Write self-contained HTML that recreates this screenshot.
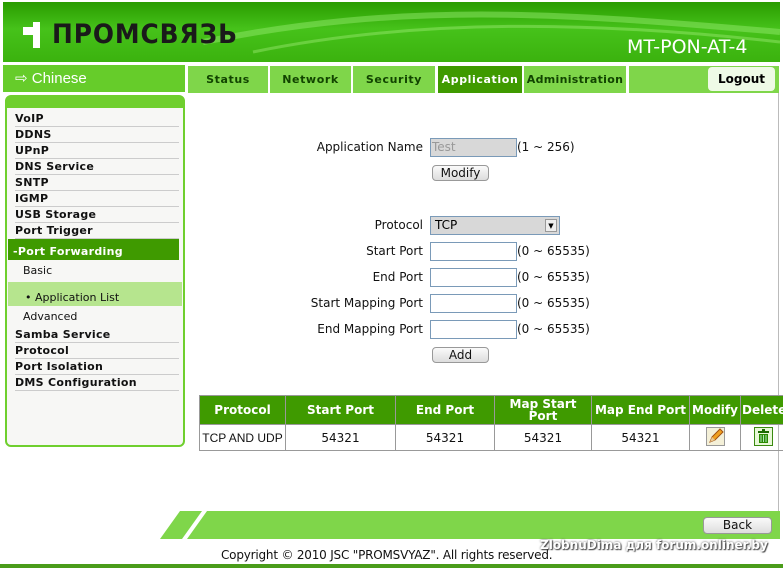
<!DOCTYPE html>
<html><head><meta charset="utf-8"><style>
*{margin:0;padding:0;box-sizing:border-box}
body{width:783px;height:568px;position:relative;background:#fff;font-family:"DejaVu Sans","Liberation Sans",sans-serif;overflow:hidden}
.abs{position:absolute}
.hdr{left:3px;top:2px;width:777px;height:60px;background:linear-gradient(180deg,#2a9c00 0%,#46c21a 45%,#3bb20e 100%);overflow:hidden}
.tab{position:absolute;top:66px;height:27px;background:#7fd64a;font-weight:bold;font-size:11px;color:#114400;text-align:center;line-height:28px;letter-spacing:.6px}
.side{left:5px;top:95px;width:180px;height:352px;border:2px solid #6fcf2e;border-radius:6px;background:#f7f7f5}
.mi{position:absolute;left:10px;width:164px;font-size:11px;font-weight:bold;color:#111;border-bottom:1px solid #ccc;height:16px;line-height:16px;letter-spacing:.3px}
.lbl{position:absolute;font-size:12px;color:#111;text-align:right;width:140px}
.inp{position:absolute;left:430px;width:87px;height:19px;border:1px solid #7a9ab8;background:#fff}
.rng{position:absolute;left:517px;font-size:12px;color:#111}
.btn{position:absolute;height:16px;border:1px solid #999;border-radius:4px;background:linear-gradient(#fafafa,#ddd);font-size:12px;text-align:center;line-height:14px;color:#111}
table{position:absolute;left:199px;top:395px;border-collapse:collapse;font-size:12px;table-layout:fixed;width:640px}
th{background:#3f9a00;color:#fff;font-size:12px;height:29px;border:1px solid #999;line-height:12px;white-space:nowrap;overflow:hidden}
td{height:26px;border:1px solid #999;text-align:center;color:#111}
</style></head><body>
<div class="abs hdr">
<svg width="777" height="60" class="abs" style="left:0;top:0"><path d="M200 40 C400 0 550 10 777 30" stroke="#8fe86a" stroke-width="6" fill="none" opacity=".5"/><path d="M250 50 C420 15 600 20 777 40" stroke="#a8f080" stroke-width="3" fill="none" opacity=".4"/></svg>
<div class="abs" style="left:20px;top:25px;width:14px;height:8px;background:#fff"></div>
<div class="abs" style="left:30px;top:20px;width:7px;height:26px;background:#fff"></div>
<div class="abs" style="left:49px;top:17px;font:bold 27px 'DejaVu Sans',sans-serif;color:#1a1a1a;letter-spacing:1px;transform:scaleX(.92);transform-origin:left">ПРОМСВЯЗЬ</div>
<div class="abs" style="left:624px;top:34px;font-size:19px;color:#fff">MT-PON-AT-4</div>
</div>
<div class="abs" style="left:3px;top:65px;width:182px;height:27px;background:#66cc2a;color:#fff;font:15px 'Liberation Sans',sans-serif;line-height:27px;padding-left:12px">⇨ Chinese</div>
<div class="tab" style="left:188px;width:80px">Status</div>
<div class="tab" style="left:270px;width:81px">Network</div>
<div class="tab" style="left:353px;width:82px">Security</div>
<div class="tab" style="left:438px;width:84px;background:#3f9a00;color:#fff">Application</div>
<div class="tab" style="left:524px;width:102px;letter-spacing:.3px">Administration</div>
<div class="tab" style="left:629px;width:150px"></div>
<div class="abs" style="left:708px;top:67px;width:67px;height:24px;background:#eefae6;border-radius:4px;font-weight:bold;font-size:12px;text-align:center;line-height:24px">Logout</div>
<div class="abs" style="left:778px;top:93px;width:1px;height:418px;background:#bbb"></div>
<div class="abs side"><div class="abs" style="left:0;top:0;width:176px;height:11px;background:#6fcf2e"></div></div>
<div class="mi" style="left:15px;top:111px">VoIP</div>
<div class="mi" style="left:15px;top:127px">DDNS</div>
<div class="mi" style="left:15px;top:143px">UPnP</div>
<div class="mi" style="left:15px;top:159px">DNS Service</div>
<div class="mi" style="left:15px;top:175px">SNTP</div>
<div class="mi" style="left:15px;top:191px">IGMP</div>
<div class="mi" style="left:15px;top:207px">USB Storage</div>
<div class="mi" style="left:15px;top:223px">Port Trigger</div>
<div class="abs" style="left:8px;top:239px;width:171px;height:21px;background:#3f9a00;color:#fff;font-size:11px;font-weight:bold;line-height:25px;padding-left:5px;letter-spacing:.3px">-Port Forwarding</div>
<div class="abs" style="left:23px;top:264px;font-size:11px;color:#111">Basic</div>
<div class="abs" style="left:8px;top:282px;width:174px;height:24px;background:#b6e58e;font-size:11px;line-height:32px;padding-left:17px;color:#111">• Application List</div>
<div class="abs" style="left:23px;top:310px;font-size:11px;color:#111">Advanced</div>
<div class="mi" style="left:15px;top:327px">Samba Service</div>
<div class="mi" style="left:15px;top:343px">Protocol</div>
<div class="mi" style="left:15px;top:359px">Port Isolation</div>
<div class="mi" style="left:15px;top:375px">DMS Configuration</div>

<div class="lbl" style="left:283px;top:140px">Application Name</div>
<div class="inp" style="top:138px;background:#d8d8d8;font-size:12px;color:#999;padding-left:1px;line-height:17px">Test</div>
<div class="rng" style="top:140px">(1 ~ 256)</div>
<div class="btn" style="left:432px;top:165px;width:57px">Modify</div>
<div class="lbl" style="left:283px;top:218px">Protocol</div>
<div class="inp" style="top:216px;width:130px;background:#d8d8d8;font-size:12px;line-height:17px;padding-left:4px">TCP<div class="abs" style="right:2px;top:2px;width:12px;height:13px;background:#eee;border:1px solid #999;font-size:7px;text-align:center;line-height:12px">▼</div></div>
<div class="lbl" style="left:283px;top:244px">Start Port</div><div class="inp" style="top:242px"></div><div class="rng" style="top:244px">(0 ~ 65535)</div>
<div class="lbl" style="left:283px;top:270px">End Port</div><div class="inp" style="top:268px"></div><div class="rng" style="top:270px">(0 ~ 65535)</div>
<div class="lbl" style="left:283px;top:296px">Start Mapping Port</div><div class="inp" style="top:294px"></div><div class="rng" style="top:296px">(0 ~ 65535)</div>
<div class="lbl" style="left:283px;top:322px">End Mapping Port</div><div class="inp" style="top:320px"></div><div class="rng" style="top:322px">(0 ~ 65535)</div>
<div class="btn" style="left:432px;top:347px;width:57px">Add</div>

<table>
<colgroup><col style="width:86px"><col style="width:110px"><col style="width:99px"><col style="width:97px"><col style="width:98px"><col style="width:51px"><col style="width:99px"></colgroup>
<tr><th>Protocol</th><th>Start Port</th><th>End Port</th><th>Map Start<br>Port</th><th>Map End Port</th><th>Modify</th><th style="text-align:left;padding-left:1px">Delete</th></tr>
<tr><td style="font-family:'Liberation Sans',sans-serif">TCP AND UDP</td><td>54321</td><td>54321</td><td>54321</td><td>54321</td>
<td><svg width="19" height="19" viewBox="0 0 19 19"><rect x=".5" y=".5" width="18" height="18" fill="#f4f0d8" stroke="#999"/><path d="M4 15 L6 10 L14 2 L17 5 L9 13 Z" fill="#f0a020" stroke="#a05010"/><path d="M4 15 L6 10 L9 13Z" fill="#e8c890"/></svg></td>
<td style="text-align:left;padding-left:13px"><svg width="19" height="19" viewBox="0 0 19 19"><rect x=".5" y=".5" width="18" height="18" fill="#e8f8d8" stroke="#3a8a10"/><rect x="4" y="4" width="11" height="2" fill="#1a6a00"/><rect x="8" y="2" width="3" height="2" fill="#1a6a00"/><rect x="5" y="7" width="9" height="9" fill="#2a8a00"/><path d="M7 8v7M9.5 8v7M12 8v7" stroke="#cfe" stroke-width=".8"/></svg></td></tr>
</table>

<svg class="abs" style="left:160px;top:511px" width="620" height="29"><polygon points="0,28 20,0 42,0 22,28" fill="#7fd64a"/><polygon points="27,28 47,0 620,0 620,28" fill="#7fd64a"/></svg>
<div class="btn" style="left:703px;top:517px;width:69px;height:17px;line-height:15px">Back</div>
<div class="abs" style="left:540px;top:538px;font:bold 12px 'DejaVu Sans',sans-serif;color:#fff;text-shadow:0 0 2px #555,1px 1px 1px #444">ZlobnuDima для forum.onliner.by</div>
<div class="abs" style="left:221px;top:548px;font:12px 'DejaVu Sans',sans-serif;color:#111;letter-spacing:-.2px">Copyright © 2010 JSC "PROMSVYAZ". All rights reserved.</div>
<div class="abs" style="left:0;top:564px;width:783px;height:4px;background:#4a9c1a"></div>
</body></html>
